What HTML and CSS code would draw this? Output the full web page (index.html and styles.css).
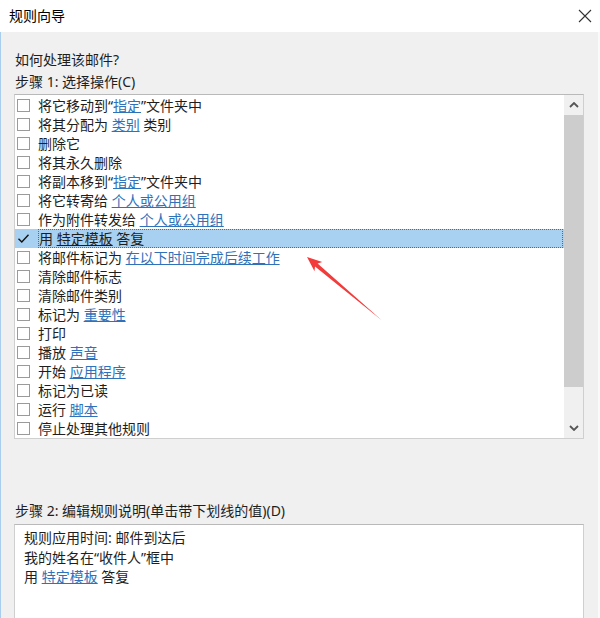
FILE: index.html
```html
<!DOCTYPE html>
<html lang="zh-CN">

<head>
  <meta charset="UTF-8">
  <meta name="viewport" content="width=device-width, initial-scale=1.0">
  <title>规则向导</title>
  <link rel="stylesheet" href="styles.css">
</head>

<body>
  <div class="window">
    <div class="titlebar">
      <span class="title">规则向导</span>
      <svg class="close" width="14" height="14" viewBox="0 0 14 14">
        <path d="M1 1 L13 13 M13 1 L1 13" stroke="#333" stroke-width="1.1" fill="none" />
      </svg>
    </div>

    <div class="panel">
      <p class="label first">如何处理该邮件?</p>
      <p class="label">步骤 1: 选择操作(C)</p>

      <div class="listbox">
        <ul class="actions">
          <li><span class="check"></span><span class="text">将它移动到“<a>指定</a>”文件夹中</span></li>
          <li><span class="check"></span><span class="text">将其分配为 <a>类别</a> 类别</span></li>
          <li><span class="check"></span><span class="text">删除它</span></li>
          <li><span class="check"></span><span class="text">将其永久删除</span></li>
          <li><span class="check"></span><span class="text">将副本移到“<a>指定</a>”文件夹中</span></li>
          <li><span class="check"></span><span class="text">将它转寄给 <a>个人或公用组</a></span></li>
          <li><span class="check"></span><span class="text">作为附件转发给 <a>个人或公用组</a></span></li>
          <li class="selected">
            <span class="check on">
              <svg width="13" height="13" viewBox="0 0 13 13"><path d="M1.5 6.8 L4.8 10 L11.5 2.8" stroke="#111" stroke-width="1.4" fill="none" /></svg>
            </span>
            <span class="text">用 <a class="plain">特定模板</a> 答复</span>
          </li>
          <li><span class="check"></span><span class="text">将邮件标记为 <a>在以下时间完成后续工作</a></span></li>
          <li><span class="check"></span><span class="text">清除邮件标志</span></li>
          <li><span class="check"></span><span class="text">清除邮件类别</span></li>
          <li><span class="check"></span><span class="text">标记为 <a>重要性</a></span></li>
          <li><span class="check"></span><span class="text">打印</span></li>
          <li><span class="check"></span><span class="text">播放 <a>声音</a></span></li>
          <li><span class="check"></span><span class="text">开始 <a>应用程序</a></span></li>
          <li><span class="check"></span><span class="text">标记为已读</span></li>
          <li><span class="check"></span><span class="text">运行 <a>脚本</a></span></li>
          <li><span class="check"></span><span class="text">停止处理其他规则</span></li>
        </ul>
        <div class="scrollbar">
          <div class="arrow">
            <svg width="10" height="6" viewBox="0 0 10 6"><path d="M1 5 L5 1 L9 5" stroke="#555" stroke-width="1.8" fill="none" /></svg>
          </div>
          <div class="thumb"></div>
          <div class="track"></div>
          <div class="arrow">
            <svg width="10" height="6" viewBox="0 0 10 6"><path d="M1 1 L5 5 L9 1" stroke="#555" stroke-width="1.8" fill="none" /></svg>
          </div>
        </div>
      </div>

      <p class="label step2">步骤 2: 编辑规则说明(单击带下划线的值)(D)</p>
      <div class="description">
        <p>规则应用时间: 邮件到达后</p>
        <p>我的姓名在“收件人”框中</p>
        <p>用 <a>特定模板</a> 答复</p>
      </div>
    </div>

    <svg class="pointer" width="600" height="618" viewBox="0 0 600 618">
      <polygon points="307,257 322.3,262.1 317.6,263.6 382,320.5 315,266.6 314.5,271.3" fill="#f23b3b" />
    </svg>
  </div>
</body>

</html>
```

FILE: styles.css
```css
* {
  padding: 0;
  margin: 0;
  box-sizing: border-box;
}

body {
  font-family: "Noto Sans", "Noto Sans CJK SC", sans-serif;
  font-size: 14px;
  color: #1e1e1e;
  background-color: #f0f0f0;
  width: 600px;
  height: 618px;
  overflow: hidden;
}

.window {
  position: relative;
  height: 618px;
}

.titlebar {
  height: 32px;
  background-color: #fff;
  display: flex;
  align-items: center;
  justify-content: space-between;
  padding: 0 8px 0 9px;
}

.title {
  font-size: 14px;
  color: #000;
  line-height: 20px;
}

.panel {
  height: 586px;
  background-color: #f0f0f0;
  border-left: 1px solid #a9cdec;
  border-right: 2px solid #fafafa;
  padding: 16px 14px 0 13px;
}

.label {
  height: 22px;
  line-height: 20px;
  padding: 2px 0 0 1px;
}

.step2 {
  margin-top: 60px;
}

.listbox {
  margin-top: 2px;
  height: 345px;
  display: flex;
  background-color: #fff;
  border: 1px solid #cfcfcf;
  border-top-color: #b9b9b9;
  overflow: hidden;
}

.actions {
  list-style: none;
  flex: 1;
  padding-top: 1px;
}

.actions li {
  height: 19px;
  display: flex;
  align-items: center;
  padding-left: 2px;
  padding-right: 1px;
}

.actions li.selected {
  background-color: #a7d0f1;
}

.check {
  width: 13px;
  height: 13px;
  border: 1px solid #9a9a9a;
  background-color: #fff;
  margin-right: 8px;
  flex-shrink: 0;
}

.check.on {
  border: none;
  background-color: transparent;
  display: flex;
}

.text {
  flex: 1;
  height: 19px;
  padding-top: 1px;
  line-height: 17px;
  white-space: nowrap;
}

.selected .text {
  border: 1px dotted #5a6a7a;
  padding-top: 0;
}

a {
  color: #2f72b9;
  text-decoration: underline;
}

a.plain {
  color: #1e1e1e;
}

.scrollbar {
  width: 19px;
  display: flex;
  flex-direction: column;
  background-color: #f0f0f0;
}

.arrow {
  height: 20px;
  display: flex;
  align-items: center;
  justify-content: center;
}

.thumb {
  height: 272px;
  background-color: #cdcdcd;
}

.track {
  flex: 1;
}

.description {
  margin-top: 3px;
  height: 110px;
  background-color: #fff;
  border: 1px solid #cfcfcf;
  border-top-color: #b9b9b9;
  padding: 3px 9px;
  line-height: 19.5px;
}

.pointer {
  position: absolute;
  left: 0;
  top: 0;
  pointer-events: none;
}
```
